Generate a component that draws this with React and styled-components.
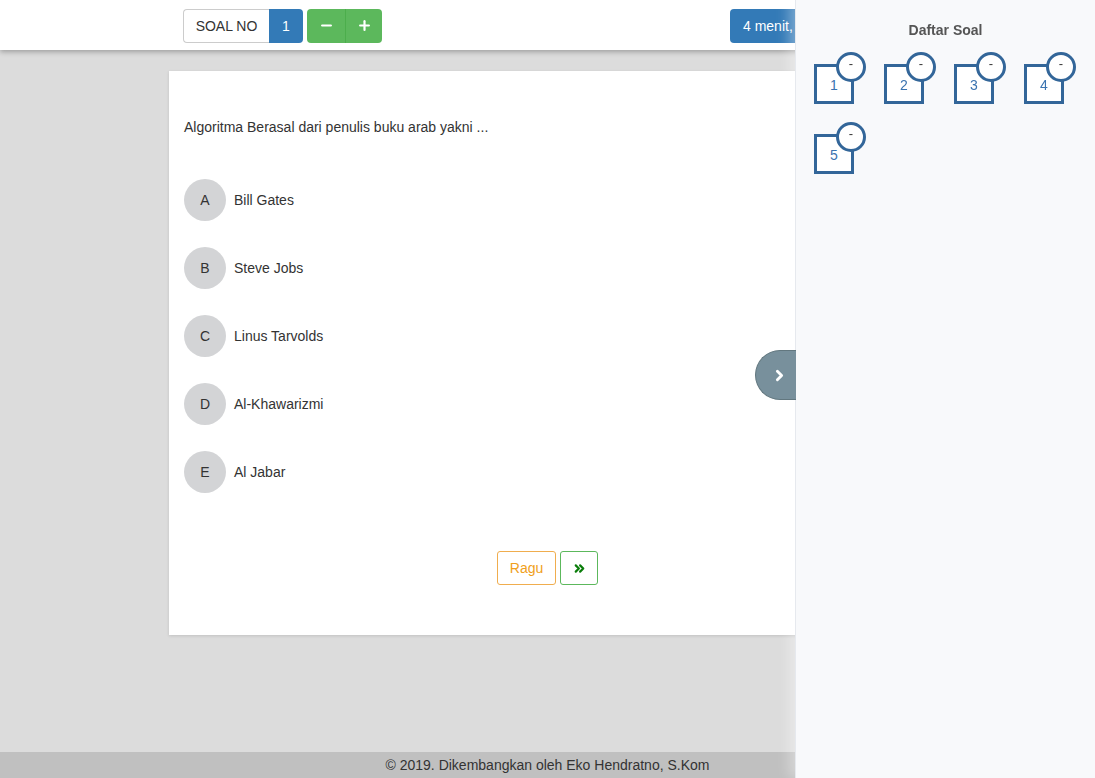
import React from "react";
import styled, { createGlobalStyle } from "styled-components";
import { Minus, Plus, ChevronRight, ChevronsRight } from "lucide-react";

const Global = createGlobalStyle`
  html, body { margin: 0; padding: 0; }
  body {
    background: #dcdcdc;
    font-family: "Liberation Sans", Arial, Helvetica, sans-serif;
    font-size: 14px;
    color: #333;
  }
  * { box-sizing: border-box; }
`;

const Page = styled.div`
  min-height: 100vh;
  display: flex;
  flex-direction: column;
`;

const Header = styled.header`
  height: 50px;
  background: #fff;
  box-shadow: 0 2px 5px rgba(0, 0, 0, 0.28);
  position: relative;
  z-index: 1;
`;

const HeaderInner = styled.div`
  width: 757px;
  margin: 0 auto;
  height: 100%;
  padding: 1px 14px 0;
  display: flex;
  align-items: center;
  gap: 4px;
`;

const Group = styled.div`
  display: flex;
  height: 34px;
`;

const SoalLabel = styled.div`
  display: flex;
  align-items: center;
  justify-content: center;
  width: 86px;
  white-space: nowrap;
  border: 1px solid #ccc;
  border-right: none;
  border-radius: 4px 0 0 4px;
  background: #fff;
  color: #333;
`;

const SoalNum = styled.div`
  display: flex;
  align-items: center;
  justify-content: center;
  width: 34px;
  background: #337ab7;
  color: #fff;
  border-radius: 0 4px 4px 0;
`;

const GreenBtn = styled.button`
  width: ${(p) => p.$w}px;
  height: 34px;
  border: none;
  background: #5cb85c;
  color: #fff;
  display: flex;
  align-items: center;
  justify-content: center;
  padding: 0;
  border-radius: ${(p) => (p.$first ? "4px 0 0 4px" : "0 4px 4px 0")};
  border-left: ${(p) => (p.$first ? "none" : "1px solid #4cae4c")};
`;

const TimerBtn = styled.div`
  margin-left: auto;
  width: 182px;
  height: 34px;
  background: #337ab7;
  color: #fff;
  border-radius: 4px;
  display: flex;
  align-items: center;
  padding: 0 13px;
  white-space: nowrap;
  font-size: 14px;
`;

const Main = styled.main`
  flex: 1;
  padding-top: 21px;
`;

const Card = styled.section`
  width: 757px;
  margin: 0 auto;
  background: #fff;
  box-shadow: 0 1px 3px rgba(0, 0, 0, 0.12);
  padding: 46px 15px 50px;
  display: flex;
  flex-direction: column;
`;

const Question = styled.p`
  margin: 0 0 42px;
  line-height: 20px;
  font-size: 14px;
  color: #333;
`;

const Options = styled.div`
  display: flex;
  flex-direction: column;
  gap: 26px;
`;

const Option = styled.div`
  display: flex;
  align-items: center;
  gap: 8px;
`;

const Letter = styled.span`
  width: 42px;
  height: 42px;
  border-radius: 50%;
  background: #d3d4d6;
  display: flex;
  align-items: center;
  justify-content: center;
  font-size: 14px;
  color: #333;
`;

const OptionText = styled.span`
  font-size: 14px;
  color: #333;
`;

const Actions = styled.div`
  display: flex;
  justify-content: center;
  gap: 4px;
  margin-top: 58px;
`;

const OutlineBtn = styled.button`
  height: 34px;
  width: ${(p) => p.$w}px;
  padding: 0;
  background: #fff;
  border: 1px solid ${(p) => p.$color};
  color: ${(p) => p.$text};
  border-radius: 3px;
  font-family: inherit;
  font-size: 14px;
  display: flex;
  align-items: center;
  justify-content: center;
`;

const Footer = styled.footer`
  height: 26px;
  background: #c0c0c0;
  display: flex;
  align-items: center;
  justify-content: center;
  font-size: 14px;
  color: #333;
`;

const Sidebar = styled.aside`
  position: fixed;
  top: 0;
  right: 0;
  bottom: 0;
  width: 300px;
  background: #f8f9fb;
  border-left: 1px solid #e6e9ee;
  box-shadow: -6px 0 12px rgba(255, 255, 255, 0.35);
  padding: 20px 18px;
  z-index: 5;
`;

const SideTitle = styled.h4`
  margin: 0;
  text-align: center;
  line-height: 20px;
  font-size: 14px;
  font-weight: bold;
  color: #555;
`;

const NumGrid = styled.div`
  margin-top: 24px;
  display: grid;
  grid-template-columns: repeat(4, 40px);
  column-gap: 30px;
  row-gap: 30px;
`;

const NumBox = styled.div`
  position: relative;
  width: 40px;
  height: 40px;
  border: 3px solid #336699;
  background: #fff;
  display: flex;
  align-items: center;
  justify-content: center;
  color: #3a73b0;
  font-size: 14px;
  padding-top: 2px;
`;

const Badge = styled.span`
  position: absolute;
  left: 19px;
  top: -15px;
  width: 30px;
  height: 30px;
  border-radius: 50%;
  border: 3px solid #336699;
  background: #fff;
  color: #333;
  font-size: 13px;
  display: flex;
  justify-content: center;
  padding-top: 2px;
  line-height: 14px;
`;

const Toggle = styled.button`
  position: absolute;
  left: -41px;
  top: 350px;
  width: 41px;
  height: 50px;
  border-radius: 25px 0 0 25px;
  background: #78909c;
  border: 1px solid #62777f;
  border-right: none;
  color: #fff;
  display: flex;
  align-items: center;
  justify-content: center;
  padding: 0 0 0 6px;
`;

const options = [
  ["A", "Bill Gates"],
  ["B", "Steve Jobs"],
  ["C", "Linus Tarvolds"],
  ["D", "Al-Khawarizmi"],
  ["E", "Al Jabar"],
];

export default function App() {
  return (
    <>
      <Global />
      <Page>
        <Header>
          <HeaderInner>
            <Group>
              <SoalLabel>SOAL NO</SoalLabel>
              <SoalNum>1</SoalNum>
            </Group>
            <Group>
              <GreenBtn $first $w={38}>
                <Minus size={15} strokeWidth={3.5} />
              </GreenBtn>
              <GreenBtn $w={37}>
                <Plus size={15} strokeWidth={3.5} />
              </GreenBtn>
            </Group>
            <TimerBtn>4 menit, 59 detik</TimerBtn>
          </HeaderInner>
        </Header>
        <Main>
          <Card>
            <Question>Algoritma Berasal dari penulis buku arab yakni ...</Question>
            <Options>
              {options.map(([l, t]) => (
                <Option key={l}>
                  <Letter>{l}</Letter>
                  <OptionText>{t}</OptionText>
                </Option>
              ))}
            </Options>
            <Actions>
              <OutlineBtn $w={59} $color="#f0ad4e" $text="#f0a020">
                Ragu
              </OutlineBtn>
              <OutlineBtn $w={38} $color="#5cb85c" $text="#0a7d0a">
                <ChevronsRight size={15} strokeWidth={3.5} />
              </OutlineBtn>
            </Actions>
          </Card>
        </Main>
        <Footer>© 2019. Dikembangkan oleh Eko Hendratno, S.Kom</Footer>
      </Page>
      <Sidebar>
        <Toggle>
          <ChevronRight size={17} strokeWidth={4} />
        </Toggle>
        <SideTitle>Daftar Soal</SideTitle>
        <NumGrid>
          {[1, 2, 3, 4, 5].map((n) => (
            <NumBox key={n}>
              {n}
              <Badge>-</Badge>
            </NumBox>
          ))}
        </NumGrid>
      </Sidebar>
    </>
  );
}
